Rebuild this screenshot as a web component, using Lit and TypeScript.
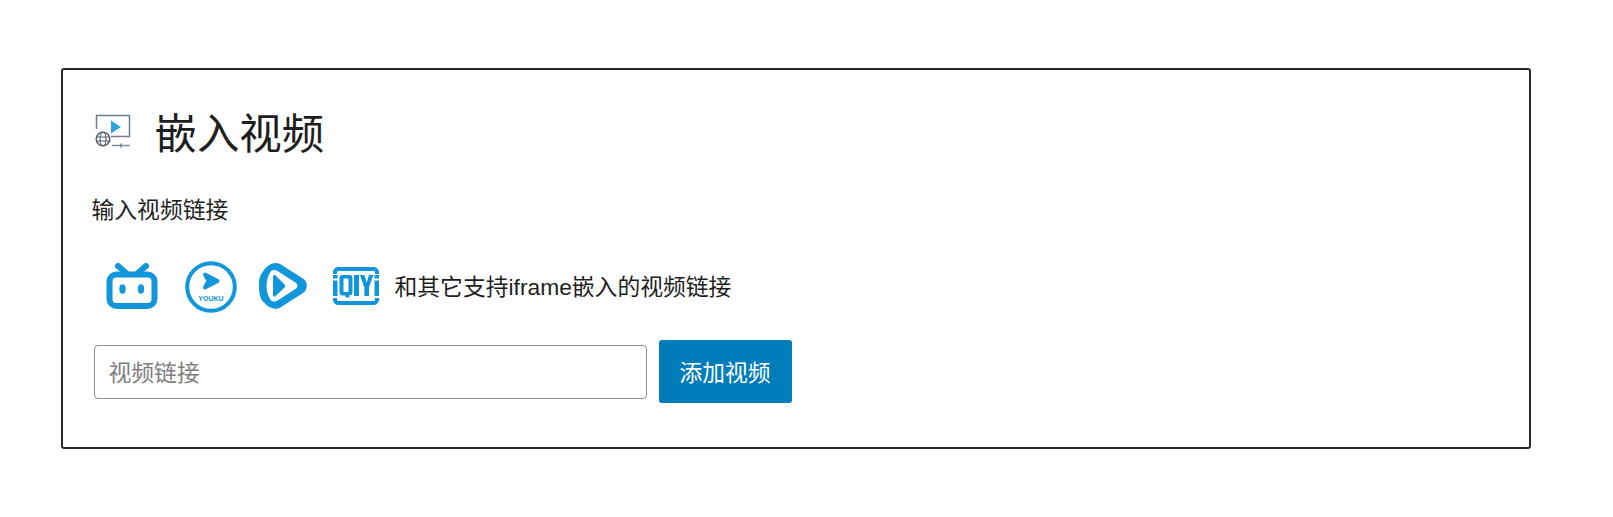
import { LitElement, html, css, svg } from 'lit';
import { customElement } from 'lit/decorators.js';

const videoIcon = svg`
  <svg class="title-icon" viewBox="0 0 36 34" width="36" height="34">
    <path d="M1.500 15V1.500h33v21H16" fill="none" stroke="#6f7c8c" stroke-width="1.500"/>
    <path d="M16 6.500l10 6.500-10 6.500z" fill="#2ea3dd"/>
    <circle cx="8" cy="25" r="6.800" fill="#fff" stroke="#556171" stroke-width="1.600"/>
    <ellipse cx="8" cy="25" rx="3" ry="6.800" fill="none" stroke="#556171" stroke-width="1.200"/>
    <path d="M1.500 23h13M1.500 27h13" stroke="#556171" stroke-width="1.200" fill="none"/>
    <path d="M17 31.500h18" stroke="#7d8a99" stroke-width="1.400"/>
    <path d="M26 29.500v4" stroke="#7d8a99" stroke-width="1.800"/>
  </svg>`;

const bilibiliIcon = svg`
  <svg class="provider bili" viewBox="0 0 52 46" width="52" height="46">
    <rect x="3.500" y="11.500" width="45" height="31.500" rx="7" fill="none" stroke="#1296db" stroke-width="6"/>
    <path d="M12 3l8 7M40 3l-8 7" stroke="#1296db" stroke-width="6" stroke-linecap="round"/>
    <ellipse cx="16.500" cy="26" rx="3.200" ry="4.800" fill="#1296db"/>
    <ellipse cx="35" cy="26" rx="3.200" ry="4.800" fill="#1296db"/>
  </svg>`;

const youkuIcon = svg`
  <svg class="provider youku" viewBox="0 0 52 52" width="52" height="52">
    <circle cx="26" cy="26" r="23.800" fill="none" stroke="#1296db" stroke-width="4"/>
    <path d="M20 13.500l12.500 6.500L20 26.500l3.500-6.500z" fill="#1296db" stroke="#1296db" stroke-width="4" stroke-linejoin="round"/>
    <text x="26" y="40" class="youku-text">YOUKU</text>
  </svg>`;

const tencentIcon = svg`
  <svg class="provider tencent" viewBox="0 0 48 46" width="48" height="46">
    <path d="M5 7C8 3 12 0 17 0c2 0 3.500.8 5.200 1.800L44 15.500c5 3 5 11.500 0 14.500L22.500 43.700c-2 1.300-3.500 2.100-5.500 2.100-4 0-9-2.500-12-6.300C2 37 0 33 0 23S2 11 5 7z" fill="#1296db"/>
    <path d="M12 8c2-1.300 4.500-1.200 6.500 0l18 11.500c2.500 1.500 2.500 5 0 6.500l-18 11.500c-2 1.200-4.500 1.300-6.500 0C9 33.500 7.500 28 7.500 23S9 12.500 12 8z" fill="#fff"/>
    <path d="M14 13.500c0-1.300 1.200-1.900 2.300-1.300l9 9c1 1 1 2.600 0 3.600l-9 8.400c-1.100.6-2.300 0-2.300-1.300z" fill="#1296db"/>
  </svg>`;

const iqiyiIcon = svg`
  <svg class="provider iqiyi" viewBox="0 0 46 38" width="46" height="38">
    <path d="M0 7V5.500C0 2 2.500 0 6 0h34c3.500 0 6 2 6 5.500V7h-4V5.500C42 4.500 41 4 40 4H6C5 4 4 4.500 4 5.500V7zM0 31v1.500C0 36 2.500 38 6 38h34c3.500 0 6-2 6-5.500V31h-4v1.500c0 1-1 1.500-2 1.500H6c-1 0-2-.5-2-1.500V31z" fill="#1296db"/>
    <path d="M0 8h4.500v3.500H0zM0 13.500h4.500V29H0z" fill="#1296db"/>
    <path fill-rule="evenodd" d="M9.500 8h7c2 0 3 1 3 3v14.500c0 2-1 3-3 3h-.7l1 2h-4l-.8-2H9.500c-2 0-3-1-3-3V11c0-2 1-3 3-3zm1.800 3.500c-.6 0-.8.300-.8.900v11.700c0 .6.200.9.800.9h3.400c.6 0 .8-.3.800-.9V12.400c0-.6-.2-.9-.8-.9z" fill="#1296db"/>
    <path d="M21 8h5v21h-5z" fill="#1296db"/>
    <path d="M27 8h4.400l2.300 7.500L36 8h4.400L36 20.500V29h-4.600v-8.500z" fill="#1296db"/>
    <path d="M41.500 8H46v3.500h-4.500zM41.500 13.500H46V29h-4.500z" fill="#1296db"/>
  </svg>`;

@customElement('app-root')
export class AppRoot extends LitElement {
  static styles = css`
    :host {
      display: block;
      height: 517px;
      box-sizing: border-box;
      padding: 68px 82px 0 61px;
      background: #fff;
      font-family: 'Liberation Sans', 'Noto Sans CJK SC', sans-serif;
      color: #1e1e1e;
    }

    .card {
      box-sizing: border-box;
      height: 381px;
      padding: 38.5px 28px 0 28.5px;
      border: 2px solid #2a2a2a;
      border-radius: 3px;
    }

    .title {
      display: flex;
      align-items: center;
      gap: 24px;
      height: 48px;
      margin-left: 3px;
    }

    .title-icon {
      flex: none;
      margin-bottom: 4px;
    }

    h1 {
      margin: 0;
      padding-top: 4px;
      font-size: 42.4px;
      font-weight: 400;
      line-height: 48px;
    }

    .label {
      margin-top: 37px;
      font-size: 22.8px;
      line-height: 32px;
    }

    .providers {
      display: flex;
      align-items: center;
      height: 60px;
      margin-top: 30px;
      margin-left: 14px;
      font-size: 22.8px;
    }

    .provider {
      flex: none;
    }

    .youku {
      margin-top: 2px;
      margin-left: 27px;
    }

    .tencent {
      margin-left: 22px;
    }

    .iqiyi {
      margin-left: 26px;
    }

    .providers span {
      margin-left: 16px;
    }

    .youku-text {
      font-family: 'Liberation Sans', sans-serif;
      font-size: 7px;
      font-weight: 700;
      text-anchor: middle;
      fill: #1296db;
    }

    form {
      display: flex;
      align-items: center;
      gap: 12px;
      margin-top: 24px;
      margin-left: 2px;
    }

    input {
      box-sizing: border-box;
      width: 553px;
      height: 54px;
      margin-top: 2px;
      padding: 2px 14px 0;
      border: 1px solid #8c8f94;
      border-radius: 4px;
      font: inherit;
      font-size: 22.8px;
      color: #1e1e1e;
      outline: none;
    }

    input::placeholder {
      color: #7e7e7e;
      opacity: 1;
    }

    button {
      box-sizing: border-box;
      width: 133px;
      height: 63px;
      padding: 0;
      border: none;
      border-radius: 3px;
      background: #007cba;
      color: #fff;
      font: inherit;
      font-size: 22.8px;
    }
  `;

  render() {
    return html`
      <section class="card">
        <div class="title">${videoIcon}<h1>嵌入视频</h1></div>
        <div class="label">输入视频链接</div>
        <div class="providers">
          ${bilibiliIcon}${youkuIcon}${tencentIcon}${iqiyiIcon}
          <span>和其它支持iframe嵌入的视频链接</span>
        </div>
        <form @submit=${(e: Event) => e.preventDefault()}>
          <input type="text" placeholder="视频链接" />
          <button type="submit">添加视频</button>
        </form>
      </section>
    `;
  }
}

declare global {
  interface HTMLElementTagNameMap {
    'app-root': AppRoot;
  }
}
